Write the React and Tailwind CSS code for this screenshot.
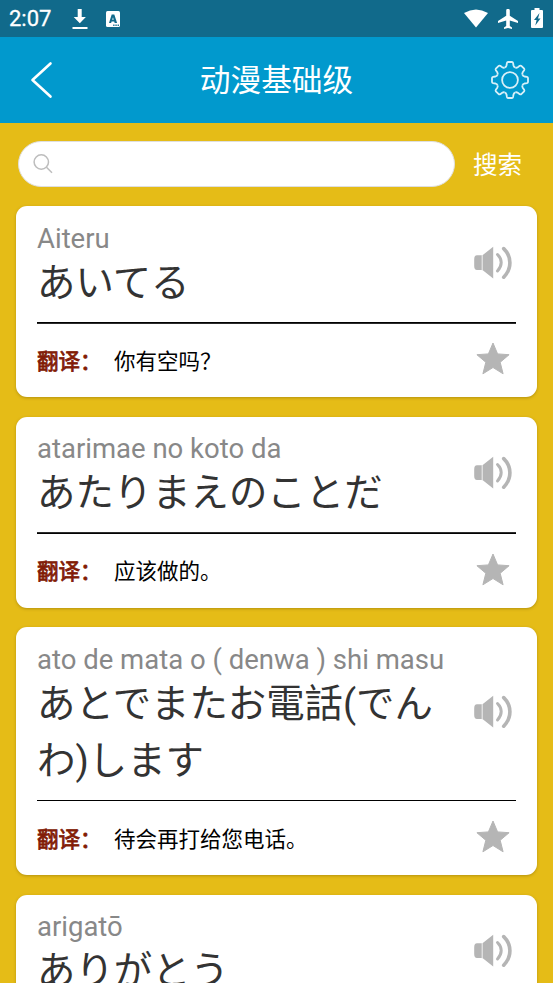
const cards = [
  { romaji: 'Aiteru', kana: 'あいてる', meaning: '你有空吗？', rule: 'h-[2px] bg-linear-to-b from-black to-[#444]' },
  { romaji: 'atarimae no koto da', kana: 'あたりまえのことだ', meaning: '应该做的。', rule: '-mt-[0.6px] mb-[0.6px] h-[2px] bg-linear-to-b from-[#444] to-black' },
  { romaji: 'ato de mata o ( denwa ) shi masu', kana: 'あとでまたお電話(でんわ)します', meaning: '待会再打给您电话。', rule: 'h-px mb-px bg-black' },
  { romaji: 'arigatō', kana: 'ありがとう', meaning: '谢谢。', rule: 'h-px mb-px bg-black' },
];

const teeth = [0, 45, 90, 135, 180, 225, 270, 315];

function StatusBar() {
  return (
    <div className="flex h-[37px] shrink-0 items-center bg-[#116a8b] pl-[9px] pr-[10px] text-white">
      <span className="w-[63px] pt-px text-[22px] leading-[36px] [-webkit-text-stroke:0.3px_#fff]">2:07</span>
      <svg className="h-[22px] w-4 shrink-0" viewBox="0 0 16 22" fill="currentColor">
        <path d="M5.7 1h4v8h4.2L7.8 15.2 1.7 9h4zM.5 19h15v2H.5z" />
      </svg>
      <svg className="ml-[18px] h-4 w-[14px] shrink-0" viewBox="0 0 14 16">
        <rect width="14" height="16" rx="1.5" fill="#fff" />
        <path fillRule="evenodd" fill="#116a8b" d="M5.7 3.5h2.6l2.8 8.5H8.7l-.5-1.6H5.6L5.1 12H3zM6.2 8.7h1.5L7 6.2z" />
        <path fill="#116a8b" d="M7.2 13.6h1.3v1.3H7.2zM9.4 13.6h1.3v1.3H9.4zM11.6 13.6h1.3v1.3h-1.3z" />
      </svg>
      <div className="flex-1" />
      <svg className="h-[19px] w-6 shrink-0" viewBox="0 0 24 19" fill="currentColor">
        <path d="M0 4Q12-3.2 24 4L12 18.5z" />
      </svg>
      <svg className="ml-[10px] h-5 w-5 shrink-0" viewBox="0 0 20 20" fill="currentColor">
        <path d="M20 14v-2l-8.2-5.2V1.6a1.8 1.8 0 0 0-3.6 0v5.2L0 12v2l8.2-2.5V17L6 18.5V20l4-1.1 4 1.1v-1.5L11.8 17v-5.5z" />
      </svg>
      <svg className="mb-px ml-[13px] h-5 w-3 shrink-0" viewBox="0 0 12 20">
        <path fill="#fff" d="M3.5 0h5v2H11a1 1 0 0 1 1 1v16a1 1 0 0 1-1 1H1a1 1 0 0 1-1-1V3a1 1 0 0 1 1-1h2.500z" />
        <path fill="#116a8b" d="M8.500 5L3 12h2.600L4.300 17.500 9.500 10.500H7z" />
      </svg>
    </div>
  );
}

function Header() {
  return (
    <header className="flex h-[86px] shrink-0 items-center justify-between bg-[#0199cd] pr-6 pl-[29px] text-white">
      <svg className="h-[38px] w-[34px]" viewBox="0 0 34 38" fill="none" stroke="#fff" strokeWidth="2.6" strokeLinecap="round" strokeLinejoin="round">
        <path d="M21.500 2.500L3.500 19l18 16.500" />
      </svg>
      <h1 className="-ml-px pt-[2px] text-[30.7px] leading-[44px]">动漫基础级</h1>
      <svg className="h-[38px] w-[38px]" viewBox="-19 -19 38 38" fill="none" stroke="#d9f0f8" strokeWidth="1.800">
        {teeth.map((a) => (
          <path
            key={a}
            transform={`rotate(${a})`}
            d="M-5.220-12.600Q-3.900-12.900-3.500-14.500L-3.100-16.900Q-2.800-18-2-18H2Q2.800-18 3.100-16.900L3.500-14.500Q3.900-12.900 5.220-12.600"
          />
        ))}
        <circle r="7.900" />
      </svg>
    </header>
  );
}

function SearchRow() {
  return (
    <div className="-mb-[0.5px] flex h-[46px] shrink-0 items-center pl-[2px]">
      <div className="flex h-[46px] w-[437px] items-center rounded-full border border-[#dfdfdf] bg-white pl-[14px]">
        <svg className="h-5 w-5" viewBox="0 0 20 20" fill="none" stroke="#bdbdbd" strokeWidth="1.500">
          <circle cx="8.300" cy="8" r="7.200" />
          <path d="M13.500 13.200l5.500 5.600" />
        </svg>
      </div>
      <span className="ml-[18px] pt-1 text-[24.6px] leading-9 text-white">搜索</span>
    </div>
  );
}

function Speaker() {
  return (
    <svg className="mr-1 mb-[7px] h-[34px] w-[38px] shrink-0" viewBox="0 0 38 34" fill="#b5b5b5">
      <path d="M3 9.300h4.800v14.800H3Q.2 24.100.2 20v-6.600Q.2 9.300 3 9.300zM8.800 9L19.200.8v31.600L8.800 24.300z" />
      <path d="M8.300 9v15.300" stroke="#dadada" strokeWidth="1" />
      <g fill="none" stroke="#b5b5b5" strokeLinecap="round">
        <path strokeWidth="3" d="M23.500 8.500q3.700 3.600 3.700 8.100t-3.700 8.400" />
        <path strokeWidth="3.600" d="M29.700 2.600q6.200 6 6.200 14.100t-6.200 14.500" />
      </g>
    </svg>
  );
}

function Card({ romaji, kana, meaning, rule }) {
  return (
    <article className="shrink-0 rounded-[11px] bg-white px-[21px] shadow-[0_1px_3px_rgba(90,70,0,0.35)]">
      <div className="flex items-center justify-between pt-[15.5px] pb-[11.5px]">
        <div className="w-[420px]">
          <p className="text-[27.5px] leading-[33px] text-[#888]">{romaji}</p>
          <p className="-mt-px text-[38.4px] leading-[57px] text-[#333]">{kana}</p>
        </div>
        <Speaker />
      </div>
      <div className={rule} />
      <div className="flex h-[73px] items-center pt-[2px] text-[21.5px] leading-8 text-black">
        <span className="w-[77px] text-[#821c06] [-webkit-text-stroke:0.8px_#821c06]">翻译：</span>
        <span className="flex-1">{meaning}</span>
        <svg className="mr-[6px] mb-[6px] h-[33px] w-[34px]" viewBox="0 0 34 33" fill="#b5b5b5" stroke="#b5b5b5" strokeWidth="1" strokeLinejoin="round">
          <path d="M17 1l4.600 10.900 11.500.8-8.900 7.600 2.900 11.500L17 25.500 6.900 31.800l2.900-11.500L.9 12.700l11.500-.8z" />
        </svg>
      </div>
    </article>
  );
}

export default function App() {
  return (
    <div className="flex h-[983px] w-[553px] flex-col overflow-hidden bg-[#e5bc17] font-[Roboto,'Noto_Sans_CJK_SC',sans-serif]">
      <StatusBar />
      <Header />
      <main className="flex min-h-0 flex-1 flex-col gap-[19.5px] overflow-hidden px-4 pt-[18px]">
        <SearchRow />
        {cards.map((c) => (
          <Card key={c.romaji} {...c} />
        ))}
      </main>
    </div>
  );
}
